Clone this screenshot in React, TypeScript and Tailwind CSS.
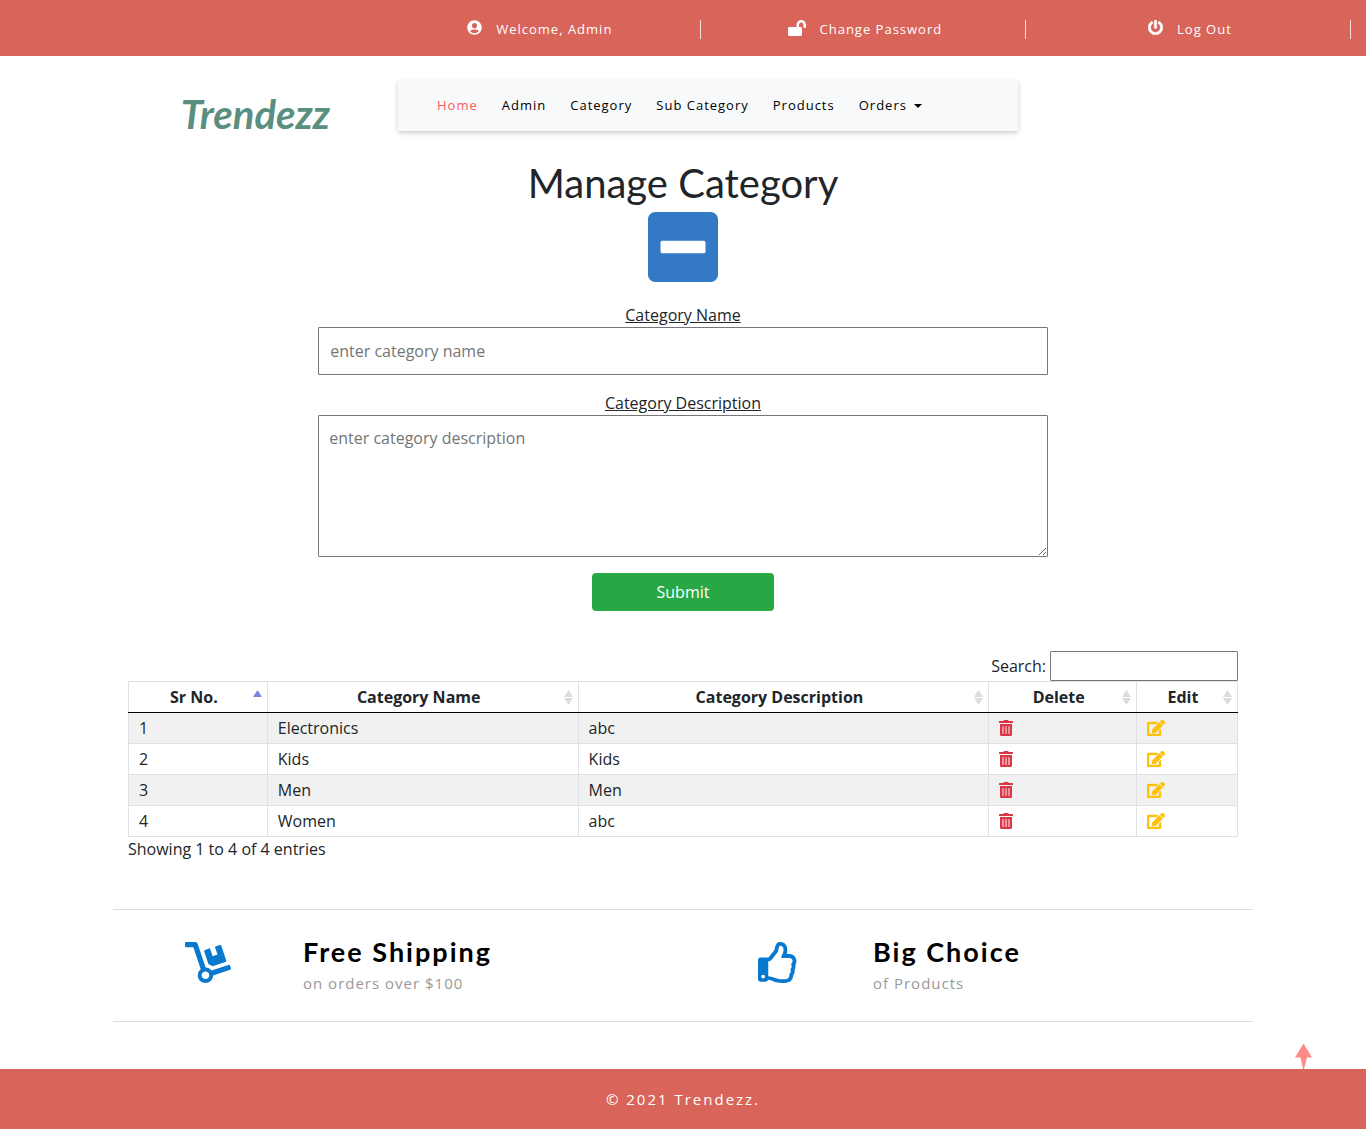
import type { ReactNode } from "react";
import {
  FaDolly,
  FaEdit,
  FaLockOpen,
  FaMinusSquare,
  FaPowerOff,
  FaRegThumbsUp,
  FaTrashAlt,
  FaUserCircle,
} from "react-icons/fa";

const categories = [
  { id: 1, name: "Electronics", description: "abc" },
  { id: 2, name: "Kids", description: "Kids" },
  { id: 3, name: "Men", description: "Men" },
  { id: 4, name: "Women", description: "abc" },
];

const columns = [
  { title: "Sr No.", width: "w-[12.5%]", sorted: true },
  { title: "Category Name", width: "w-[28%]", sorted: false },
  { title: "Category Description", width: "w-[37%]", sorted: false },
  { title: "Delete", width: "w-[13.3%]", sorted: false },
  { title: "Edit", width: "w-[9.1%]", sorted: false },
];

const navLinks = ["Home", "Admin", "Category", "Sub Category", "Products"];

function TopLink({ icon, children }: { icon: ReactNode; children: ReactNode }) {
  return (
    <li className="flex h-[19px] flex-1 items-center justify-center border-r border-white/80 pl-1">
      <a href="#" className="flex items-center gap-3.5 text-[13px] font-medium tracking-[1px] text-white">
        {icon}
        <span>{children}</span>
      </a>
    </li>
  );
}

function SortArrows({ sorted }: { sorted: boolean }) {
  return (
    <svg viewBox="0 0 9 15" className="absolute top-2 right-[5px] h-[15px] w-[9px]" aria-hidden="true">
      <path d="M4.5 0 9 7H0z" fill={sorted ? "#7c83e3" : "#dcdcdc"} />
      {!sorted && <path d="M0 8h9l-4.500 7z" fill="#dcdcdc" />}
    </svg>
  );
}

function Feature({ icon, title, text }: { icon: ReactNode; title: string; text: string }) {
  return (
    <div className="flex flex-1 items-start pt-6">
      <div className="flex w-1/3 justify-center pt-2 text-[#0879cf]">{icon}</div>
      <div>
        <h2 className="font-['Lato',sans-serif] text-[27px] leading-9 font-bold tracking-[2px] text-black">{title}</h2>
        <p className="text-[15px] leading-[26px] tracking-[1px] text-[#999]">{text}</p>
      </div>
    </div>
  );
}

export default function App() {
  return (
    <div className="bg-white font-['Open_Sans',sans-serif] text-base text-[#212529]">
      <header>
        <div className="flex h-14 justify-end bg-[#d9645a] px-[15px] pt-5">
          <ul className="flex w-[73%]">
            <TopLink icon={<FaUserCircle className="mb-1 size-[15px]" />}>Welcome, Admin</TopLink>
            <TopLink icon={<FaLockOpen className="mb-1 h-4 w-[18px]" />}>Change Password</TopLink>
            <TopLink icon={<FaPowerOff strokeWidth={20} className="mb-1 size-[15px] stroke-current" />}>Log Out</TopLink>
          </ul>
        </div>
        <div className="mx-auto flex max-w-[1140px] pt-6">
          <div className="w-1/4 pt-2.5 text-center">
            <a href="#" className="block font-['Lato',sans-serif] text-[40px] leading-12 font-bold text-[#5a8f80] italic">
              Trendezz
            </a>
          </div>
          <nav className="flex h-[51px] w-[620px] items-center gap-6 bg-[#f8f9fb] pl-[39px] text-[13px] tracking-[1px] text-black shadow-[0_2px_5px_rgba(0,0,0,0.2)]">
            {navLinks.map((link) => (
              <a key={link} href="#" className={link === "Home" ? "text-[#fa5a5a]" : undefined}>
                {link}
              </a>
            ))}
            <button type="button" className="flex items-center gap-[7px] tracking-[1px]">
              Orders
              <span className="border-x-4 border-t-4 border-x-transparent border-t-black" />
            </button>
          </nav>
        </div>
      </header>

      <main className="mx-auto max-w-[1140px]">
        <section className="mx-auto flex w-[64%] flex-col items-center pt-[21px]">
          <h1 className="font-['Lato',sans-serif] text-[40px] leading-12">Manage Category</h1>
          <FaMinusSquare className="h-20 w-[70px] text-[#3379c6]" />
          <form className="mt-4 flex w-full flex-col items-center">
            <label htmlFor="name" className="leading-6 underline">
              Category Name
            </label>
            <input
              id="name"
              type="text"
              placeholder="enter category name"
              className="h-12 w-full rounded-[1px] border border-[#767676] px-[11px] placeholder:text-[#757575]"
            />
            <label htmlFor="description" className="mt-4 leading-6 underline">
              Category Description
            </label>
            <textarea
              id="description"
              placeholder="enter category description"
              className="h-[142px] w-full rounded-[1px] border border-[#767676] p-2.5 placeholder:text-[#757575]"
            />
            <button type="submit" className="mt-4 h-[38px] w-1/4 rounded bg-[#28a745] text-white">
              Submit
            </button>
          </form>
        </section>

        <section className="px-[15px] pt-10">
          <div className="flex items-center justify-end gap-1">
            <label htmlFor="search">Search:</label>
            <input
              id="search"
              type="search"
              className="h-[30px] w-[188px] rounded-[1px] border border-[#767676] px-1"
            />
          </div>
          <table className="w-full table-fixed border-collapse">
            <thead>
              <tr>
                {columns.map((c) => (
                  <th
                    key={c.title}
                    className={`relative h-[31px] border border-[#dee2e6] border-b-black pr-[18px] pl-2.5 font-bold ${c.width}`}
                  >
                    {c.title}
                    <SortArrows sorted={c.sorted} />
                  </th>
                ))}
              </tr>
            </thead>
            <tbody>
              {categories.map((row) => (
                <tr key={row.id} className="h-[31px] odd:bg-[#f1f1f1] [&>td]:border [&>td]:border-[#dee2e6] [&>td]:px-2.5">
                  <td>{row.id}</td>
                  <td>{row.name}</td>
                  <td>{row.description}</td>
                  <td>
                    <button type="button" aria-label={`Delete ${row.name}`} className="block text-[#dc3545]">
                      <FaTrashAlt className="h-4 w-3.5" />
                    </button>
                  </td>
                  <td>
                    <button type="button" aria-label={`Edit ${row.name}`} className="block text-[#ffc107]">
                      <FaEdit strokeWidth={14} className="h-4 w-[18px] stroke-current" />
                    </button>
                  </td>
                </tr>
              ))}
            </tbody>
          </table>
          <p className="leading-6">Showing 1 to 4 of 4 entries</p>
        </section>

        <section className="mt-12 flex h-[113px] border-y border-[#ddd]">
          <Feature icon={<FaDolly className="h-[41px] w-[46px]" />} title="Free Shipping" text="on orders over $100" />
          <Feature icon={<FaRegThumbsUp className="size-[41px]" />} title="Big Choice" text="of Products" />
        </section>
      </main>

      <div className="flex h-[47px] items-end justify-end pr-[54px]">
        <a href="#" aria-label="Back to top">
          <svg viewBox="0 0 17 26" className="block h-[26px] w-[17px]" fill="#ff8a87">
            <path d="M8.500 0.500 17 14.500H12L9 26H8L5.500 14.500H0z" />
          </svg>
        </a>
      </div>
      <footer className="flex h-[60px] items-center justify-center bg-[#d9645a] text-[15px] font-medium tracking-[2px] text-white">
        © 2021 Trendezz.
      </footer>
    </div>
  );
}
